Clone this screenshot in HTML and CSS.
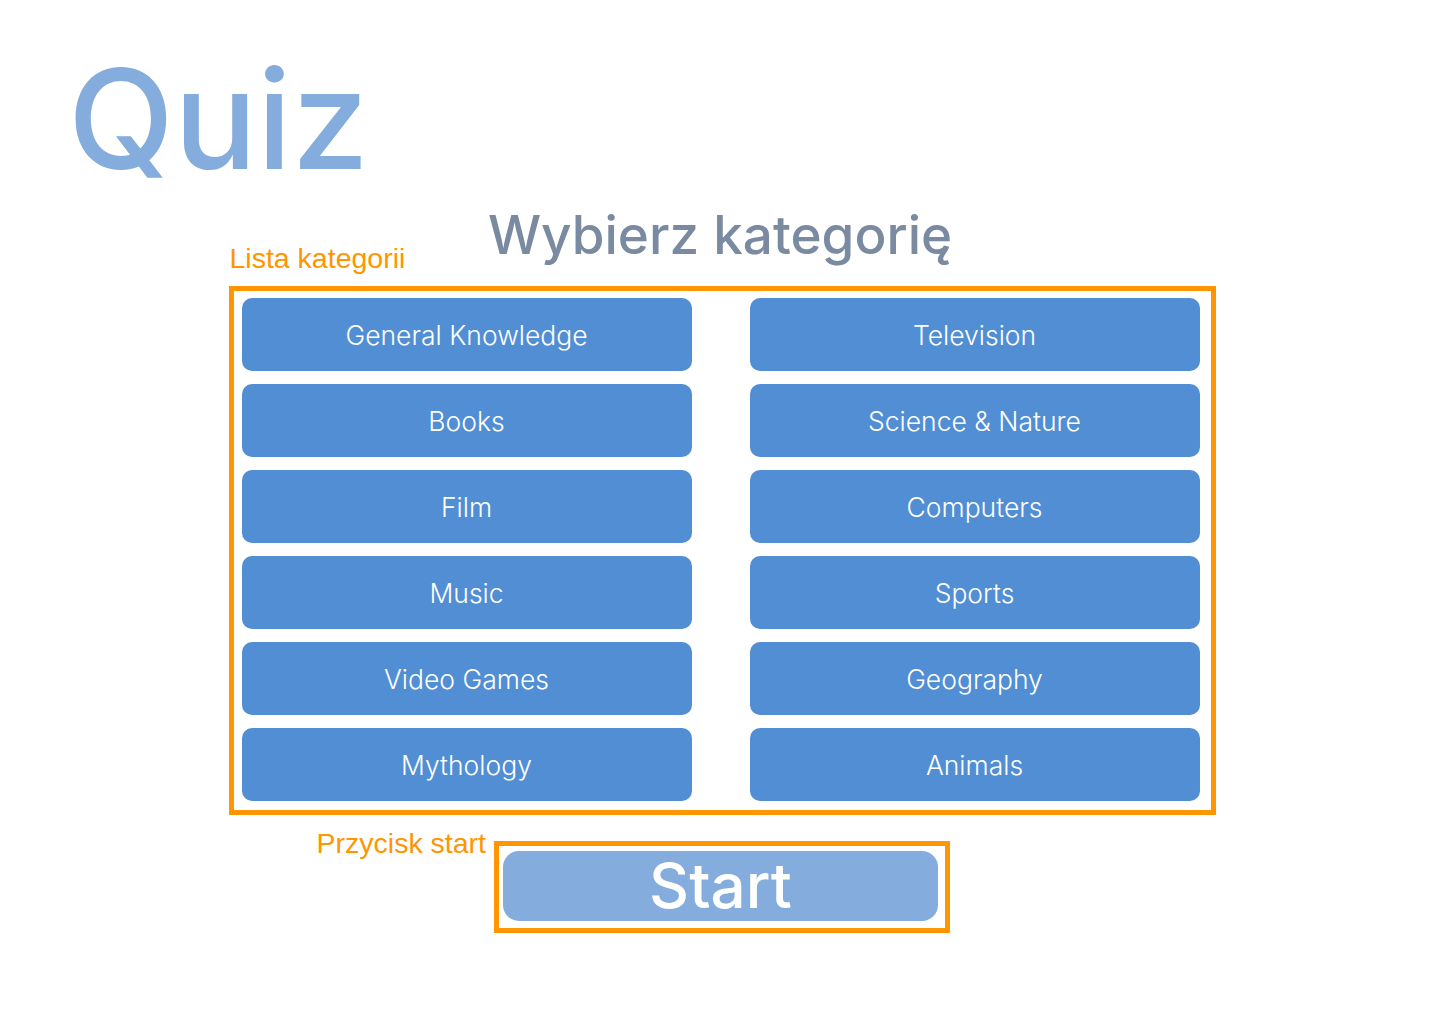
FILE: index.html
```html
<!DOCTYPE html>
<html>
<head>
    <meta charset="utf-8">
    <link rel="stylesheet" href="styles.css">
</head>
<body>
    <h1 class="logo">Quiz</h1>

    <div class="main">
        <h2 class="heading">Wybierz kategorię</h2>

        <div class="frame frame-list">
            <span class="note note-list">Lista kategorii</span>
            <div class="categories">
                <button class="category">General Knowledge</button>
                <button class="category">Television</button>
                <button class="category">Books</button>
                <button class="category">Science &amp; Nature</button>
                <button class="category">Film</button>
                <button class="category">Computers</button>
                <button class="category">Music</button>
                <button class="category">Sports</button>
                <button class="category">Video Games</button>
                <button class="category">Geography</button>
                <button class="category">Mythology</button>
                <button class="category">Animals</button>
            </div>
        </div>

        <div class="frame frame-start">
            <span class="note note-start">Przycisk start</span>
            <button class="start">Start</button>
        </div>
    </div>
</body>
</html>
```

FILE: styles.css
```css
body {
    margin: 0;
    font-family: Inter, "Noto Sans", sans-serif;
    background: #fff;
}
.logo {
    margin: 0;
    padding: 44px 0 0 68px;
    font-size: 138px;
    font-weight: 500;
    line-height: 150px;
    color: #84acdd;
    letter-spacing: 0;
}
.main {
    display: flex;
    flex-direction: column;
    align-items: center;
}
.heading {
    margin: 6px 0 16px;
    font-size: 53px;
    font-weight: 500;
    line-height: 70px;
    color: #7a8aa0;
}
.frame {
    position: relative;
    border: 5px solid #ff9500;
}
.note {
    position: absolute;
    font-family: "Liberation Sans", Arial, sans-serif;
    font-size: 28.5px;
    color: #ff9500;
    white-space: nowrap;
}
.note-list {
    left: -4px;
    top: -49px;
}
.note-start {
    right: calc(100% + 13px);
    top: -19px;
}
.frame-list {
    width: 958px;
    padding: 7px 11px 9px 8px;
    margin-left: 4px;
}
.categories {
    display: grid;
    grid-template-columns: 450px 450px;
    justify-content: space-between;
    row-gap: 13px;
}
.category {
    height: 73px;
    border: none;
    border-radius: 10px;
    background: #518ed3;
    color: #fff;
    font-family: Inter, "Noto Sans", sans-serif;
    font-size: 26.5px;
    font-weight: 300;
    cursor: pointer;
}
.frame-start {
    margin-top: 26px;
    padding: 5px 7px 7px 4px;
    margin-left: 4px;
}
.start {
    display: block;
    width: 435px;
    height: 70px;
    border: none;
    border-radius: 16px;
    background: #84acdd;
    color: #fff;
    font-family: Inter, "Noto Sans", sans-serif;
    font-size: 62px;
    font-weight: 500;
    line-height: 70px;
    padding: 0;
    cursor: pointer;
}
```
